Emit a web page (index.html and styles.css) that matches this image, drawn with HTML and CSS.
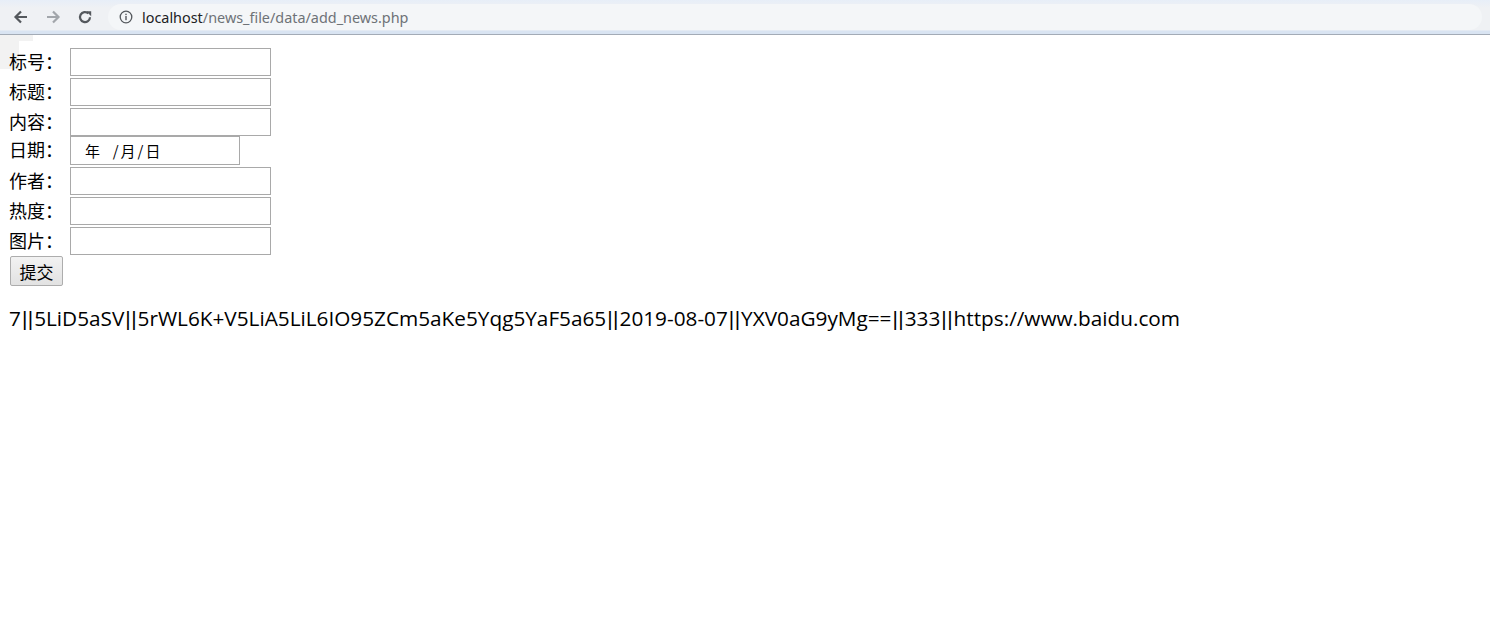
FILE: index.html
```html
<!DOCTYPE html>
<html lang="zh-CN">
<head>
<meta charset="utf-8">
<title>add_news</title>
<link rel="stylesheet" href="styles.css">
</head>
<body>
<header class="chrome">
  <div class="nav">
    <svg class="ico back" width="16" height="16" viewBox="0 0 16 16"><path d="M14 8H3.5M8 2.5 2.5 8 8 13.5" fill="none" stroke="currentColor" stroke-width="2.2"/></svg>
    <svg class="ico fwd" width="16" height="16" viewBox="0 0 16 16"><path d="M2 8h10.5M8 2.5 13.5 8 8 13.5" fill="none" stroke="currentColor" stroke-width="2.2"/></svg>
    <svg class="ico reload" width="16" height="16" viewBox="0 0 16 16"><path d="M13 8.2A5 5 0 1 1 11.4 4.4" fill="none" stroke="currentColor" stroke-width="2.2"/><path d="M9.2 2.2h5v5z" fill="currentColor"/></svg>
  </div>
  <div class="omnibox">
    <svg class="info" width="14" height="14" viewBox="0 0 14 14"><circle cx="7" cy="7" r="5.8" fill="none" stroke="currentColor" stroke-width="1.3"/><rect x="6.3" y="6" width="1.4" height="4.2" fill="currentColor"/><rect x="6.3" y="3.7" width="1.4" height="1.4" fill="currentColor"/></svg>
    <span class="url"><span class="host">localhost</span>/news_file/data/add_news.php</span>
  </div>
</header>
<div class="page">
  <div class="corner"></div>
  <form class="form">
    <div class="row"><span class="lbl">标号：</span><input class="field" type="text"></div>
    <div class="row"><span class="lbl">标题：</span><input class="field" type="text"></div>
    <div class="row"><span class="lbl">内容：</span><input class="field" type="text"></div>
    <div class="row row-date"><span class="lbl">日期：</span><span class="date"><span class="date-text">年&nbsp;&nbsp;/月/日</span></span></div>
    <div class="row"><span class="lbl">作者：</span><input class="field" type="text"></div>
    <div class="row"><span class="lbl">热度：</span><input class="field" type="text"></div>
    <div class="row"><span class="lbl">图片：</span><input class="field" type="text"></div>
    <div class="row"><button class="submit" type="button">提交</button></div>
  </form>
  <p class="result">7<span class="sep">||</span>5LiD5aSV<span class="sep">||</span>5rWL6K+V5LiA5LiL6IO95ZCm5aKe5Yqg5YaF5a65<span class="sep">||</span>2019-08-07<span class="sep">||</span>YXV0aG9yMg==<span class="sep">||</span>333<span class="sep">||</span>https://www.baidu.com</p>
</div>
</body>
</html>
```

FILE: styles.css
```css
html, body {
  margin: 0;
  padding: 0;
  background: #ffffff;
}
body {
  font-family: "Open Sans", "Noto Sans CJK SC", sans-serif;
  color: #000;
}
.chrome {
  height: 34px;
  border-bottom: 1px solid #a3abb6;
  background: linear-gradient(#e7eef8 0, #eff1f4 8px, #eff1f4 30px, #d9e4f2 31px, #d9e4f2 34px);
  display: flex;
  align-items: flex-start;
}
.nav {
  display: flex;
  align-items: center;
  gap: 16px;
  padding: 9px 0 0 13px;
  width: 95px;
}
.ico { display: block; }
.back { color: #54585d; }
.fwd { color: #a2a6ab; }
.reload { color: #54585d; }
.omnibox {
  flex: 1;
  margin: 4px 8px 0 0;
  height: 26px;
  border-radius: 13px;
  background: #f4f6f8;
  display: flex;
  align-items: center;
  padding-left: 11px;
  gap: 9px;
  font-family: "Noto Sans", "Open Sans", sans-serif;
  font-size: 14.4px;
}
.info { color: #54585d; display: block; }
.url { color: #6e7277; }
.host { color: #202124; }
.page {
  position: relative;
  padding: 12px 8px 8px 8px;
}
.corner {
  position: absolute;
  left: 0;
  top: 0;
  width: 33px;
  height: 6px;
  background: #f2f2f2;
}
.corner::after {
  content: "";
  position: absolute;
  left: 0;
  top: 6px;
  width: 19px;
  height: 28px;
  background: #f2f2f2;
}
.form {
  position: relative;
  display: flex;
  flex-direction: column;
  margin: 0;
}
.row {
  height: 30px;
  display: flex;
  align-items: center;
}
.row-date {
  margin-top: -2px;
  margin-bottom: 1px;
}
.lbl {
  width: 62px;
  font-family: "Noto Sans CJK SC", sans-serif;
  font-size: 18px;
  line-height: 24px;
  margin-top: -3px;
  padding-left: 1px;
  box-sizing: border-box;
}
.field {
  width: 201px;
  height: 28px;
  box-sizing: border-box;
  border: 1px solid #a9a9a9;
  margin: 0;
  padding: 0 4px;
  background: #fff;
  font-size: 14px;
}
.date {
  width: 170px;
  height: 29px;
  box-sizing: border-box;
  border: 1px solid #a9a9a9;
  display: flex;
  align-items: center;
  padding-left: 14px;
  font-family: "Noto Sans CJK SC", sans-serif;
  font-size: 15px;
  letter-spacing: 2px;
}
.submit {
  margin: 0 0 0 2px;
  width: 53px;
  height: 30px;
  border: 1px solid #adadad;
  border-radius: 2px;
  background: linear-gradient(#f2f2f2, #e2e2e2);
  font-family: "Noto Sans CJK SC", sans-serif;
  font-size: 17px;
  padding: 0;
  color: #000;
}
.result {
  margin: 18px 0 0 0;
  font-size: 20.75px;
  line-height: 28px;
  padding-left: 1px;
}
.sep {
  font-family: "Liberation Sans", sans-serif;
  letter-spacing: 0.5px;
  margin: 0 0.5px 0 1px;
}
```
